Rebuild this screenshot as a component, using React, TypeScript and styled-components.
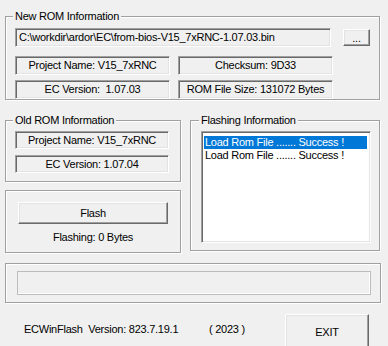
import React from "react";
import styled, { createGlobalStyle } from "styled-components";

const Global = createGlobalStyle`
  html, body { margin: 0; padding: 0; background: #f0f0f0; }
  body {
    font-family: "Liberation Sans", Arial, sans-serif;
    font-size: 11px;
    letter-spacing: -0.25px;
    color: #000;
  }
  * { box-sizing: border-box; }
`;

const Window = styled.div`
  width: 388px;
  height: 346px;
  overflow: hidden;
  padding-left: 5px;
  display: flex;
  flex-direction: column;
`;

const Group = styled.fieldset<{ $w: number; $mt: number; $pad: string }>`
  margin: ${(p) => p.$mt}px 0 0 0;
  width: ${(p) => p.$w}px;
  min-width: 0;
  padding: ${(p) => p.$pad};
  border: 1px solid #a0a0a0;
  box-shadow: inset 1px 1px 0 #fff, 1px 1px 0 #fff;
  display: flex;
  flex-direction: column;
`;

const Legend = styled.legend`
  padding: 0 2px;
  margin-left: -2px;
  line-height: 14px;
  height: 14px;
  background: #f0f0f0;
`;

const Row = styled.div<{ $gap: number; $mt?: number }>`
  display: flex;
  align-items: center;
  gap: ${(p) => p.$gap}px;
  margin-top: ${(p) => p.$mt ?? 0}px;
`;

const sunken = `
  border: 1px solid;
  border-color: #a0a0a0 #fff #fff #a0a0a0;
  box-shadow: inset 1px 1px 0 #696969, inset -1px -1px 0 #e3e3e3;
`;

const raised = `
  border: 1px solid;
  border-color: #fff #696969 #696969 #fff;
  box-shadow: inset -1px -1px 0 #a0a0a0, inset 1px 1px 0 #e3e3e3;
  background: #f0f0f0;
  font-family: inherit;
  font-size: 11px;
  letter-spacing: -0.25px;
  color: #000;
  padding: 0;
`;

const PathBox = styled.div`
  ${sunken}
  width: 317px;
  height: 19px;
  padding: 0 3px;
  line-height: 17px;
  white-space: nowrap;
  overflow: hidden;
`;

const InfoLabel = styled.div<{ $w: number; $h: number }>`
  ${sunken}
  width: ${(p) => p.$w}px;
  height: ${(p) => p.$h}px;
  line-height: ${(p) => p.$h - 2}px;
  text-align: center;
  white-space: pre;
`;

const Button = styled.button<{ $w: number; $h: number }>`
  ${raised}
  width: ${(p) => p.$w}px;
  height: ${(p) => p.$h}px;
  flex: none;
`;

const Stack = styled.div<{ $gap: number }>`
  display: flex;
  flex-direction: column;
  gap: ${(p) => p.$gap}px;
`;

const Middle = styled.div`
  display: flex;
  gap: 9px;
  align-items: flex-start;
`;

const LeftCol = styled.div`
  display: flex;
  flex-direction: column;
  width: 176px;
`;

const StatusText = styled.div`
  margin-top: 7px;
  line-height: 13px;
  text-align: center;
`;

const ListBox = styled.div`
  ${sunken}
  width: 170px;
  height: 112px;
  background: #fff;
  padding: 4px 3px 0 2px;
`;

const ListItem = styled.div<{ $sel?: boolean }>`
  height: 13px;
  line-height: 13px;
  padding-left: 1px;
  white-space: nowrap;
  background: ${(p) => (p.$sel ? "#0078d7" : "transparent")};
  color: ${(p) => (p.$sel ? "#fff" : "#000")};
`;

const Progress = styled.div`
  width: 354px;
  height: 24px;
  border: 1px solid #bcbcbc;
  background: #f0f0f0;
  box-shadow: inset -1px -1px 0 #fff;
`;

const Footer = styled.div`
  display: flex;
  align-items: flex-start;
  margin-top: 11px;
  padding-left: 19px;
`;

const FootText = styled.div<{ $w: number }>`
  width: ${(p) => p.$w}px;
  margin-top: 9px;
  line-height: 13px;
  white-space: pre;
`;

export default function App() {
  return (
    <>
      <Global />
      <Window>
        <Group $w={375} $mt={9} $pad="5px 9px 0 9px">
          <Legend>New ROM Information</Legend>
          <Row $gap={12}>
            <PathBox>C:\workdir\ardor\EC\from-bios-V15_7xRNC-1.07.03.bin</PathBox>
            <Button $w={27} $h={17}>...</Button>
          </Row>
          <Row $gap={8} $mt={9}>
            <InfoLabel $w={155} $h={19}>Project Name: V15_7xRNC</InfoLabel>
            <InfoLabel $w={155} $h={19}>Checksum: 9D33</InfoLabel>
          </Row>
          <Row $gap={8} $mt={5}>
            <InfoLabel $w={155} $h={19}>EC Version:  1.07.03</InfoLabel>
            <InfoLabel $w={155} $h={19}>ROM File Size: 131072 Bytes</InfoLabel>
          </Row>
        </Group>

        <Middle>
          <LeftCol>
            <Group $w={176} $mt={13} $pad="4px 9px 8px 9px">
              <Legend>Old ROM Information</Legend>
              <Stack $gap={6}>
                <InfoLabel $w={154} $h={18}>Project Name: V15_7xRNC</InfoLabel>
                <InfoLabel $w={154} $h={18}>EC Version: 1.07.04</InfoLabel>
              </Stack>
            </Group>
            <Group $w={176} $mt={8} $pad="11px 12px 8px 12px">
              <Button $w={150} $h={22}>Flash</Button>
              <StatusText>Flashing: 0 Bytes</StatusText>
            </Group>
          </LeftCol>
          <Group $w={190} $mt={13} $pad="4px 10px 7px 10px">
            <Legend>Flashing Information</Legend>
            <ListBox>
              <ListItem $sel>Load Rom File ....... Success !</ListItem>
              <ListItem>Load Rom File ....... Success !</ListItem>
            </ListBox>
          </Group>
        </Middle>

        <Group $w={376} $mt={10} $pad="7px 11px 7px 11px">
          <Progress />
        </Group>

        <Footer>
          <FootText $w={185}>ECWinFlash  Version: 823.7.19.1</FootText>
          <FootText $w={76}>( 2023 )</FootText>
          <Button $w={84} $h={36}>EXIT</Button>
        </Footer>
      </Window>
    </>
  );
}
